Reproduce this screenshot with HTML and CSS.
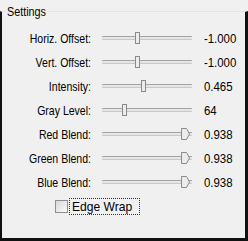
FILE: index.html
```html
<!DOCTYPE html>
<html lang="en">
<head>
  <meta charset="UTF-8" />
  <title>Settings</title>
  <link rel="stylesheet" href="styles.css">
</head>
<body>
  <fieldset class="settings">
    <legend><span>Settings</span></legend>
    <div class="rows">
      <label>Horiz. Offset:</label>
      <div class="slider"><span class="thumb" style="left: 33px"></span></div>
      <span class="value">-1.000</span>

      <label>Vert. Offset:</label>
      <div class="slider"><span class="thumb" style="left: 33px"></span></div>
      <span class="value">-1.000</span>

      <label>Intensity:</label>
      <div class="slider"><span class="thumb" style="left: 39px"></span></div>
      <span class="value">0.465</span>

      <label>Gray Level:</label>
      <div class="slider"><span class="thumb" style="left: 20px"></span></div>
      <span class="value">64</span>

      <label>Red Blend:</label>
      <div class="slider"><svg class="thumb-end" style="left: 79px" width="9" height="12" viewBox="0 0 9 12"><path d="M0.5 0.5 H5.5 L8.5 6 L5.5 11.5 H0.5 Z" fill="#ececec" stroke="#8a8a8a"/></svg></div>
      <span class="value">0.938</span>

      <label>Green Blend:</label>
      <div class="slider"><svg class="thumb-end" style="left: 79px" width="9" height="12" viewBox="0 0 9 12"><path d="M0.5 0.5 H5.5 L8.5 6 L5.5 11.5 H0.5 Z" fill="#ececec" stroke="#8a8a8a"/></svg></div>
      <span class="value">0.938</span>

      <label>Blue Blend:</label>
      <div class="slider"><svg class="thumb-end" style="left: 79px" width="9" height="12" viewBox="0 0 9 12"><path d="M0.5 0.5 H5.5 L8.5 6 L5.5 11.5 H0.5 Z" fill="#ececec" stroke="#8a8a8a"/></svg></div>
      <span class="value">0.938</span>
    </div>
    <div class="check">
      <span class="box"></span>
      <span class="check-label"><span>Edge Wrap</span></span>
    </div>
  </fieldset>
</body>
</html>
```

FILE: styles.css
```css
body {
  margin: 0;
  padding-top: 5px;
  background: #f0f0f0;
  font-family: "Liberation Sans", Arial, sans-serif;
  font-size: 13px;
  color: #000;
}

.settings {
  margin: 0;
  padding: 0;
  width: 248px;
  height: 236px;
  box-sizing: border-box;
  border: none;
  border-top: 1px solid #dce5ec;
  border-left: 2px solid #111;
  border-right: 3px solid #111;
  border-bottom: 3px solid #111;
}

.settings legend {
  margin-left: 4px;
  padding: 0 1px;
  width: 38px;
  line-height: 13px;
  white-space: nowrap;
}

.settings legend span {
  display: inline-block;
  transform: scaleX(0.83);
  transform-origin: left center;
}

.rows {
  display: grid;
  grid-template-columns: 89px 90px auto;
  grid-auto-rows: 24px;
  column-gap: 11px;
  align-items: center;
  padding-top: 8px;
}

.rows label {
  text-align: right;
  line-height: 13px;
  white-space: nowrap;
  transform: scaleX(0.81);
  transform-origin: right center;
}

.value {
  padding-left: 1px;
  line-height: 13px;
  transform: scaleX(0.88);
  transform-origin: left center;
}

/* slider: groove + thumb */
.slider {
  position: relative;
  height: 12px;
}

.slider::before {
  content: "";
  position: absolute;
  left: 0; right: 0;
  top: 4px;
  height: 2px;
  border-top: 1px solid #a3a3a3;
  border-bottom: 1px solid #c8c8c8;
  background: #e6e6e6;
  border-radius: 1px;
}

.thumb {
  position: absolute;
  top: 0;
  width: 3px;
  height: 10px;
  border: 1px solid #8a8a8a;
  background: #ececec;
}

.thumb-end {
  position: absolute;
  top: 0;
  display: block;
}

/* checkbox */
.check {
  display: flex;
  align-items: center;
  margin: 4px 0 0 53px;
}

.box {
  width: 11px;
  height: 11px;
  border: 1px solid #8e8f8f;
  background: linear-gradient(135deg, #d8d8d8, #fbfbfb);
}

.check-label {
  margin-left: 1px;
  padding: 1px 1px 1px 2px;
  width: 66px;
  border: 1px dotted #333;
  line-height: 13px;
  white-space: nowrap;
}

.check-label span {
  display: inline-block;
  transform: scaleX(0.93);
  transform-origin: left center;
}
```
